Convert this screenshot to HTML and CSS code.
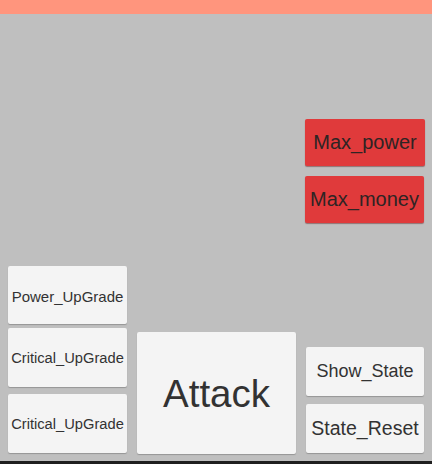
FILE: index.html
```html
<!DOCTYPE html>
<html lang="en">
<head>
<meta charset="utf-8">
<title>Game UI</title>
<link rel="stylesheet" href="styles.css">
</head>
<body>
<div class="screen">
  <div class="topbar"></div>
  <div class="stage">
    <div class="max-group">
      <button class="btn btn-red">Max_power</button>
      <button class="btn btn-red btn-red-second">Max_money</button>
    </div>
    <div class="controls">
      <div class="upgrade-list">
        <button class="btn btn-upgrade btn-upgrade-first">Power_UpGrade</button>
        <button class="btn btn-upgrade">Critical_UpGrade</button>
        <button class="btn btn-upgrade btn-upgrade-last">Critical_UpGrade</button>
      </div>
      <button class="btn btn-attack">Attack</button>
      <div class="state-list">
        <button class="btn btn-state btn-show">Show_State</button>
        <button class="btn btn-state btn-reset">State_Reset</button>
      </div>
    </div>
  </div>
  <div class="footer"></div>
</div>
</body>
</html>
```

FILE: styles.css
```css
* {
  box-sizing: border-box;
}

html, body {
  margin: 0;
  padding: 0;
}

body {
  width: 432px;
  height: 464px;
  overflow: hidden;
  font-family: "Liberation Sans", Arial, sans-serif;
  background: #bfbfbf;
}

.screen {
  height: 464px;
  display: flex;
  flex-direction: column;
}

.topbar {
  height: 14px;
  flex: none;
  background: #ff957d;
}

.stage {
  flex: 1;
  display: flex;
  flex-direction: column;
  background-color: #bfbfbf;
}

.footer {
  height: 3px;
  flex: none;
  background: #1f1f1f;
}

.btn {
  display: flex;
  align-items: center;
  justify-content: center;
  border: none;
  margin: 0;
  padding: 0;
  border-radius: 2px;
  font-family: "Liberation Sans", Arial, sans-serif;
  color: #323232;
  background: #f4f4f4;
  box-shadow: 0 1px 1px rgba(0, 0, 0, 0.22);
  white-space: nowrap;
}

.max-group {
  display: flex;
  flex-direction: column;
  align-items: flex-end;
  gap: 10px;
  padding: 105px 7px 0 0;
}

.btn-red {
  width: 120px;
  height: 47px;
  background: #e03a3b;
  font-size: 20px;
  color: #2e2424;
  box-shadow: 0 1px 1px rgba(90, 20, 20, 0.45);
}

.btn-red-second {
  margin-right: 1px;
  width: 119px;
}

.controls {
  margin-top: auto;
  display: flex;
  align-items: flex-end;
  gap: 10px;
  padding: 0 8px 8px 8px;
}

.upgrade-list {
  width: 119px;
  display: flex;
  flex-direction: column;
  gap: 4px;
}

.btn-upgrade {
  width: 119px;
  height: 59px;
  font-size: 14.7px;
}

.btn-upgrade-first {
  height: 58px;
  font-size: 15px;
  padding-top: 3px;
}

.btn-upgrade-last {
  margin-top: 3px;
}

.btn-attack {
  width: 159px;
  height: 122px;
  font-size: 38.5px;
  padding-top: 2px;
  margin-bottom: -1px;
}

.state-list {
  width: 118px;
  display: flex;
  flex-direction: column;
  gap: 8px;
}

.btn-state {
  width: 118px;
  height: 49px;
}

.btn-show {
  font-size: 18px;
}

.btn-reset {
  font-size: 19.5px;
}
```
